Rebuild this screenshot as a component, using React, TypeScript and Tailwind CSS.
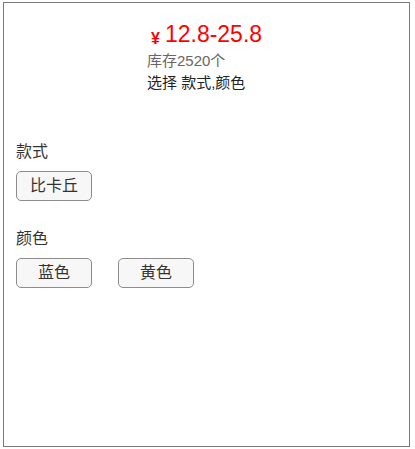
const skus = [
  { name: '款式', options: ['比卡丘'] },
  { name: '颜色', options: ['蓝色', '黄色'] },
]

export default function App() {
  return (
    <div className="pt-[2px] pl-[3px] font-['Liberation_Sans','Noto_Sans_CJK_SC',sans-serif]">
      <div className="w-[407px] h-[445px] border border-[#7a7a7a] bg-white">
        <div className="pl-[143px] pt-[15px]">
          <div className="flex items-baseline text-[#f00] h-[32px] pl-[4px]">
            <span className="text-[16px] font-bold mr-[5px] translate-y-[2px]">¥</span>
            <span className="text-[23px] leading-[32px]">12.8-25.8</span>
          </div>
          <div className="text-[15px] leading-[22px] text-[#666]">库存2520个</div>
          <div className="text-[15px] leading-[22px] text-[#222]">选择 款式,颜色</div>
        </div>
        <div className="pl-[12px] pt-[47px]">
          {skus.map((sku) => (
            <div key={sku.name} className="mb-[27px]">
              <div className="text-[16px] leading-[22px] text-[#333] mb-[8px]">{sku.name}</div>
              <div className="flex gap-[26px]">
                {sku.options.map((opt) => (
                  <button
                    key={opt}
                    className="w-[76px] h-[30px] rounded-[5px] border border-[#8c8c8c] bg-[#f7f7f7] text-[16px] text-[#333]"
                  >
                    {opt}
                  </button>
                ))}
              </div>
            </div>
          ))}
        </div>
      </div>
    </div>
  )
}
